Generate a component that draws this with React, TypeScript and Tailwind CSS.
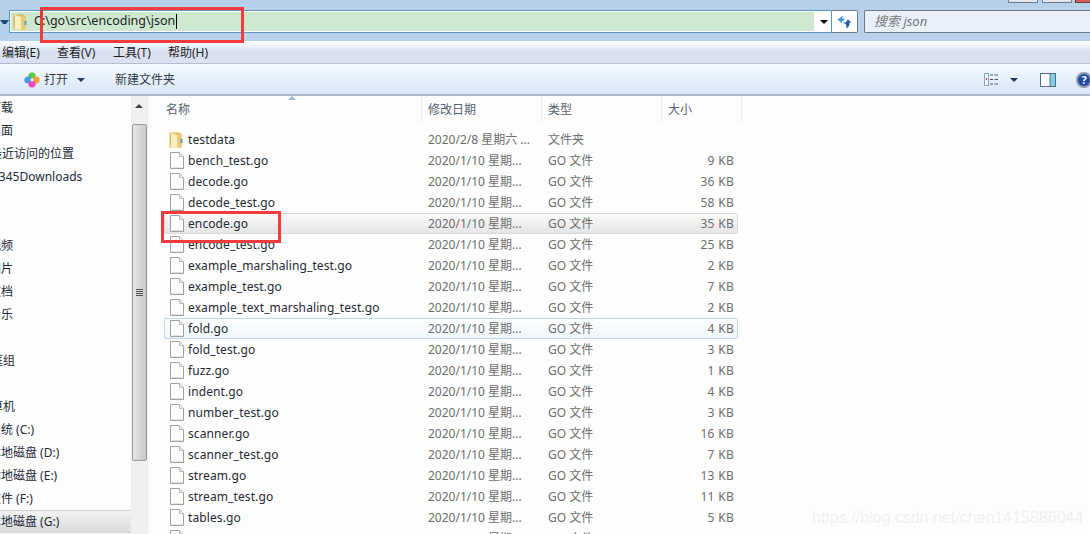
const FONT = "font-['Noto_Sans','Noto_Sans_CJK_SC',sans-serif]";

// root entries of the tree sit one level further to the left
const navItems = [
  { label: "下载", ml: "-ml-[11px]" },
  { label: "桌面", ml: "-ml-[11px]" },
  { label: "最近访问的位置", ml: "-ml-[10px]" },
  { label: "2345Downloads", ml: "-ml-[8px]" },
  { label: "", ml: "" },
  { label: "", ml: "" },
  { label: "视频", ml: "-ml-[11px]" },
  { label: "图片", ml: "-ml-[11px]" },
  { label: "文档", ml: "-ml-[11px]" },
  { label: "音乐", ml: "-ml-[11px]" },
  { label: "", ml: "" },
  { label: "家庭组", ml: "-ml-[21px]" },
  { label: "", ml: "" },
  { label: "计算机", ml: "-ml-[21px]" },
  { label: "系统 (C:)", ml: "-ml-[11px]" },
  { label: "本地磁盘 (D:)", ml: "-ml-[11px]" },
  { label: "本地磁盘 (E:)", ml: "-ml-[11px]" },
  { label: "文件 (F:)", ml: "-ml-[11px]" },
  { label: "本地磁盘 (G:)", ml: "-ml-[11px]" },
];

const files = [
  ["bench_test.go", "9 KB"],
  ["decode.go", "36 KB"],
  ["decode_test.go", "58 KB"],
  ["encode.go", "35 KB"],
  ["encode_test.go", "25 KB"],
  ["example_marshaling_test.go", "2 KB"],
  ["example_test.go", "7 KB"],
  ["example_text_marshaling_test.go", "2 KB"],
  ["fold.go", "4 KB"],
  ["fold_test.go", "3 KB"],
  ["fuzz.go", "1 KB"],
  ["indent.go", "4 KB"],
  ["number_test.go", "3 KB"],
  ["scanner.go", "16 KB"],
  ["scanner_test.go", "7 KB"],
  ["stream.go", "13 KB"],
  ["stream_test.go", "11 KB"],
  ["tables.go", "5 KB"],
  ["tags.go", "1 KB"],
];

function FolderIcon({ className }: { className: string }) {
  return (
    <svg className={className} viewBox="0 0 14 16">
      <path d="M0.5 1.500 Q0.5 0.5 1.500 0.5 H10 L12.500 2 V15.500 H1.500 Q0.5 15.500 0.5 14.500 Z" fill="#dcbc5c" />
      <path d="M2 1 L8.500 3 V15.500 H2 Z" fill="#f9f0c0" />
      <path d="M8.500 2.500 L12.500 2 V15.500 H8.500 Z" fill="#e8cb70" />
      <rect x="11.500" y="7" width="2" height="4" fill="#5a9ad0" />
    </svg>
  );
}

function FileIcon() {
  return (
    <svg className="w-[14px] h-[17px] shrink-0" viewBox="0 0 14 17">
      <path d="M0.5 0.5 H9.5 L13.5 4.5 V16.5 H0.5 Z" fill="#fdfdfd" stroke="#a0a0a0" />
      <path d="M9.5 0.5 V4.5 H13.5" fill="#ececec" stroke="#bdbdbd" />
      <path d="M1.5 15.5 H12.5" stroke="#e4e4e4" />
    </svg>
  );
}

function Row({
  name,
  date,
  type,
  size,
  folder,
  state,
}: {
  name: string;
  date: string;
  type: string;
  size: string;
  folder?: boolean;
  state?: "hot" | "focus";
}) {
  const box =
    state === "hot"
      ? "border-[#d9d9d9] bg-gradient-to-b from-[#fafafa] to-[#e5e5e5]"
      : state === "focus"
        ? "border-[#b9d7f2] bg-gradient-to-b from-[#fdfeff] to-[#f0f6fc]"
        : "border-transparent";
  return (
    <div className={`flex items-center h-[21px] w-[574px] ml-[16px] border rounded-[2px] box-border ${box}`}>
      <div className={`w-[23px] flex shrink-0 ${folder ? "pl-[4px]" : "pl-[5px]"}`}>
        {folder ? <FolderIcon className="w-[14px] h-[16px]" /> : <FileIcon />}
      </div>
      <div className="w-[240px] text-[#1f2a33] whitespace-nowrap tracking-[0.1px]">{name}</div>
      <div className="w-[120px] text-[#6d6d6d] whitespace-nowrap">{date}</div>
      <div className="w-[120px] text-[#6d6d6d] whitespace-nowrap">{type}</div>
      <div className="w-[66px] text-[#6d6d6d] text-right whitespace-nowrap tracking-[0.3px]">{size}</div>
    </div>
  );
}

export default function App() {
  return (
    <div className={`relative w-[1090px] h-[534px] overflow-hidden bg-[#fdfdfd] text-[12px] flex flex-col ${FONT}`}>
      {/* address bar */}
      <div className="h-[41px] bg-gradient-to-b from-[#b7d0ea] to-[#b9d1ea] flex items-start pt-[10px] shrink-0 relative">
        <div className="w-[9px] h-[3px] mt-[10px] shrink-0 border-t-[4px] border-x-[3px] border-x-transparent border-t-[#1f4a7a]" />
        <div className="w-[823px] h-[23px] shrink-0 bg-white border border-[#5c97c4] flex items-center">
          <div className="w-[803px] h-[19px] ml-[1px] shrink-0 bg-[#cde8cf] flex items-center">
            <FolderIcon className="w-[14px] h-[16px] ml-[2px]" />
            <span className="ml-[7px] text-[12.500px] text-[#222] leading-none">C:\go\src\encoding\json</span>
            <span className="w-px h-[15px] bg-black ml-[1px]" />
          </div>
          <div className="ml-[6px] w-0 h-0 border-t-[4px] border-x-[4px] border-x-transparent border-t-black" />
        </div>
        <div className="w-[26px] h-[23px] shrink-0 bg-white border border-l-0 border-[#6b7a88] rounded-r-[2px] flex items-center justify-center">
          <svg className="w-[15px] h-[14px]" viewBox="0 0 15 14">
            <path d="M7 0.5 C6 2 5.500 2.500 5 3.500 H7.500 L7 6 H5 V8.500 L0.5 4.500 L4 2 Z" fill="#4a9be0" />
            <path d="M9.500 13.500 C9.500 11 9.500 9.500 8 8.500 H6.500 V7.500 H8.500 L11 4.500 L14.500 7.500 H12.500 C12.500 10 12 12 9.500 13.500 Z" fill="#1d5ba4" />
          </svg>
        </div>
        <div className="ml-[6px] flex-1 h-[23px] bg-[#e9f0f9] border border-r-0 border-[#6b7a88] rounded-l-[2px] flex items-center pl-[9px] text-[#777] italic text-[13px]">
          搜索 json
        </div>
        <div className="absolute top-0 left-[1008px] w-[30px] h-[3px] bg-[#dfe8f2] border-b border-x border-[#6e7c8c]" />
        <div className="absolute top-0 left-[1042px] w-[30px] h-[3px] bg-[#dfe8f2] border-b border-x border-[#6e7c8c]" />
        <div className="absolute top-0 left-[1075px] w-[15px] h-[3px] bg-[#d0605a] border-b border-l border-[#6e3c3c]" />
      </div>

      {/* menu bar */}
      <div className="h-[23px] shrink-0 bg-gradient-to-b from-[#fdfefe] via-[#d9e0f0] to-[#dbe1f0] border-b border-[#b5bdcc] flex items-center text-[#1e1e1e] pl-[2px] pt-[2px] whitespace-nowrap">
        <span className="w-[55px]">编辑(E)</span>
        <span className="w-[56px]">查看(V)</span>
        <span className="w-[55px]">工具(T)</span>
        <span>帮助(H)</span>
      </div>

      {/* toolbar */}
      <div className="h-[32px] shrink-0 bg-gradient-to-b from-[#f5fafe] via-[#e6f0fa] to-[#d9e5f4] border-b-2 border-[#a9b8cb] flex items-center text-[#333a4a] relative whitespace-nowrap pt-[1px]">
        <svg className="ml-[24px] w-[16px] h-[16px] shrink-0" viewBox="0 0 16 16">
          <circle cx="8" cy="4" r="3.6" fill="#5cc84a" />
          <circle cx="4" cy="8" r="3.6" fill="#3d9be0" />
          <circle cx="12" cy="8" r="3.6" fill="#f0a13a" />
          <circle cx="8" cy="12" r="3.6" fill="#e84cc0" />
          <circle cx="8" cy="8" r="1.4" fill="#fff" />
        </svg>
        <span className="ml-[4px] w-[24px]">打开</span>
        <span className="ml-[9px] w-0 h-0 shrink-0 border-t-[4px] border-x-[4px] border-x-transparent border-t-[#223a5e]" />
        <span className="ml-[30px] w-[60px]">新建文件夹</span>
        <svg className="ml-[809px] w-[15px] h-[13px] shrink-0" viewBox="0 0 15 13">
          <rect x="0.500" y="0.500" width="4" height="12" fill="#eef3fa" stroke="#8fa2b8" />
          <rect x="2" y="5" width="1" height="2" fill="#d33" />
          <path d="M6 2 H9 M10.500 2 H14 M6 6.500 H9 M10.500 6.500 H14 M6 11 H9 M10.500 11 H14" stroke="#45576e" />
        </svg>
        <span className="ml-[11px] w-0 h-0 shrink-0 border-t-[4px] border-x-[4px] border-x-transparent border-t-[#1d3557]" />
        <svg className="ml-[22px] w-[16px] h-[14px] shrink-0" viewBox="0 0 16 14">
          <rect x="0.500" y="0.500" width="15" height="13" fill="#fff" stroke="#4f6e8c" />
          <rect x="10" y="1" width="5" height="12" fill="#7fd0e2" />
          <path d="M10 1 V13" stroke="#4f6e8c" />
        </svg>
        <div className="ml-[20px] w-[16px] h-[16px] rounded-full bg-[#1f4aa8] border-2 border-[#8f9bae] text-white font-bold text-[11px] leading-[12px] text-center shrink-0">
          ?
        </div>
      </div>

      <div className="flex flex-1 min-h-0">
        {/* nav pane */}
        <div className="w-[131px] shrink-0 overflow-hidden text-[#1e2a38]">
          {navItems.map((item, i) => (
            <div
              key={i}
              className={`h-[23px] flex items-center whitespace-nowrap ${
                i === 18 ? "bg-gradient-to-b from-[#f2f2f2] to-[#dcdcdc] border-y border-[#d4d4d4]" : ""
              }`}
            >
              <span className={item.ml}>{item.label}</span>
            </div>
          ))}
        </div>

        {/* scrollbar */}
        <div className="w-[16px] shrink-0 bg-[#f0f0f0] flex flex-col items-center pt-[8px]">
          <span className="w-0 h-0 border-b-[4px] border-x-[4px] border-x-transparent border-b-[#444]" />
          <div className="w-[15px] h-[337px] mt-[16px] bg-gradient-to-r from-[#e6e6e6] to-[#c8c8c8] border border-[#9a9a9a] rounded-[2px] flex flex-col items-center justify-center gap-[1px]">
            <span className="w-[7px] h-px bg-[#555]" />
            <span className="w-[7px] h-px bg-[#555]" />
            <span className="w-[7px] h-px bg-[#555]" />
            <span className="w-[7px] h-px bg-[#555]" />
          </div>
        </div>

        {/* file list */}
        <div className="flex-1 min-w-0 border-l border-[#e6edf5] overflow-hidden">
          <div className="h-[26px] flex text-[#55606e] relative">
            <div className="w-[274px] pl-[18px] pt-[5px] border-r border-[#e3ebf3]">名称</div>
            <div className="w-[120px] pl-[6px] pt-[5px] border-r border-[#e3ebf3]">修改日期</div>
            <div className="w-[120px] pl-[6px] pt-[5px] border-r border-[#e3ebf3]">类型</div>
            <div className="w-[80px] pl-[6px] pt-[5px] border-r border-[#e3ebf3]">大小</div>
            <span className="absolute left-[140px] top-0 w-0 h-0 border-b-[4px] border-x-[4px] border-x-transparent border-b-[#9dbcd8]" />
          </div>
          <div className="h-[7px]" />
          <Row folder name="testdata" date="2020/2/8 星期六 ..." type="文件夹" size="" />
          {files.map(([name, size], i) => (
            <Row
              key={name}
              name={name}
              date="2020/1/10 星期..."
              type="GO 文件"
              size={size}
              state={i === 3 ? "hot" : i === 8 ? "focus" : undefined}
            />
          ))}
        </div>
      </div>

      {/* annotations drawn over the screenshot */}
      <div className="absolute left-[40px] top-[7px] w-[204px] h-[36px] border-[3px] border-[#f23c3c]" />
      <div className="absolute left-[161px] top-[211px] w-[120px] h-[32px] border-[3px] border-[#f23c3c]" />
      <div className="absolute left-[812px] top-[506px] text-[16px] text-[#f0f0f0] font-['Liberation_Sans',sans-serif] whitespace-nowrap">
        https://blog.csdn.net/chen1415886044
      </div>
    </div>
  );
}
